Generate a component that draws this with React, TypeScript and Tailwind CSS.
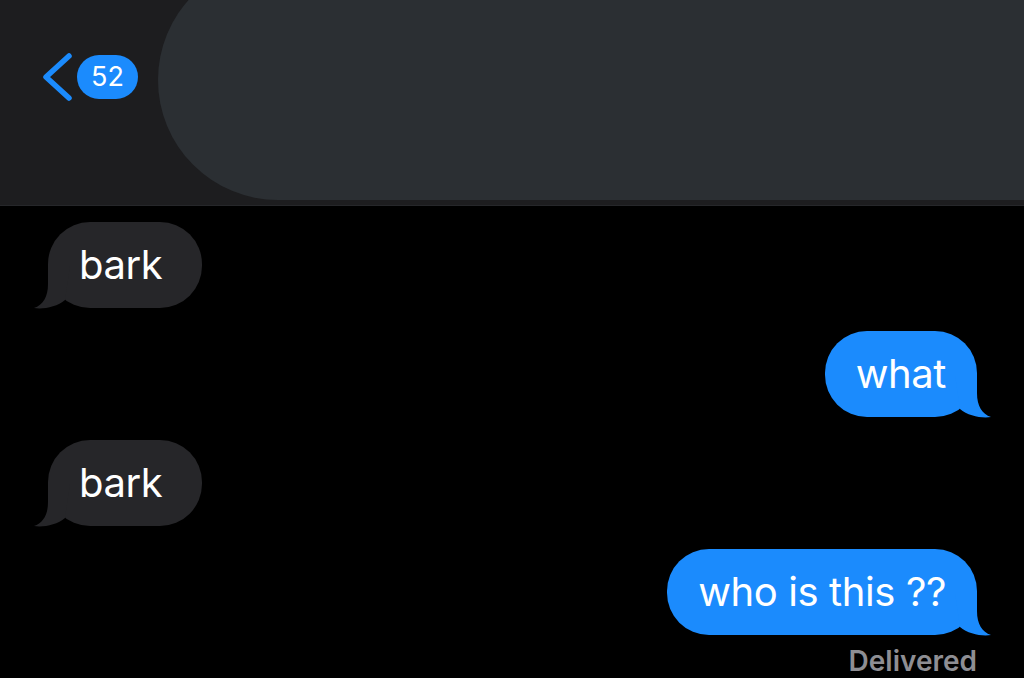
import React from "react";

const FONT = { fontFamily: "Inter, 'Noto Sans', 'Liberation Sans', sans-serif" };

function Tail({ side, color }: { side: "left" | "right"; color: string }) {
  return (
    <svg
      width="38"
      height="44"
      viewBox="0 0 38 44"
      className={
        side === "right"
          ? "absolute right-[-16px] bottom-[-2px]"
          : "absolute left-[-16px] bottom-[-2px] -scale-x-100"
      }
      aria-hidden
    >
      <path d="M0 0 H22 V18 C22 31 27 39 36 42 C27 43.5 13 41 5 34 Z" fill={color} />
    </svg>
  );
}

function Bubble({ text, mine }: { text: string; mine?: boolean }) {
  const color = mine ? "#1b8bfd" : "#262629";
  return (
    <div className={mine ? "flex justify-end" : "flex justify-start"}>
      <div
        className={
          "relative flex h-[86px] items-center rounded-[42px] text-[40px] tracking-[-0.4px] text-white " +
          (mine ? "bg-[#1b8bfd] px-[31px]" : "bg-[#262629] pr-[40px] pl-[31px]")
        }
      >
        <Tail side={mine ? "right" : "left"} color={color} />
        <span className="relative">{text}</span>
      </div>
    </div>
  );
}

export default function App() {
  return (
    <div className="h-[678px] w-[1024px] overflow-hidden bg-black" style={FONT}>
      <header className="flex h-[206px] overflow-hidden border-b border-[#26272a] bg-[#1d1d1f]">
        <div className="flex w-[158px] shrink-0 items-start pt-[55px] pl-[40px]">
          <svg width="34" height="52" viewBox="0 0 34 52" className="mt-[-3px]" aria-hidden>
            <path
              d="M29 4 L6 25 L29 46"
              fill="none"
              stroke="#1b8bfd"
              strokeWidth="5.5"
              strokeLinecap="round"
              strokeLinejoin="round"
            />
          </svg>
          <span className="ml-[3px] flex h-[44px] w-[61px] items-center justify-center rounded-full bg-[#1b8bfd] text-[27px] text-white">
            52
          </span>
        </div>
        <div className="mt-[-40px] h-[240px] flex-1 rounded-l-[120px] bg-[#2b2f33]" />
      </header>

      <main className="flex flex-col gap-[23px] pt-[16px] pr-[47px] pl-[48px]">
        <Bubble text="bark" />
        <Bubble text="what" mine />
        <Bubble text="bark" />
        <div className="flex flex-col items-end">
          <Bubble text="who is this ??" mine />
          <span className="mt-[10px] text-[28px] leading-[32px] font-semibold text-[#8e8e93]">
            Delivered
          </span>
        </div>
      </main>
    </div>
  );
}
